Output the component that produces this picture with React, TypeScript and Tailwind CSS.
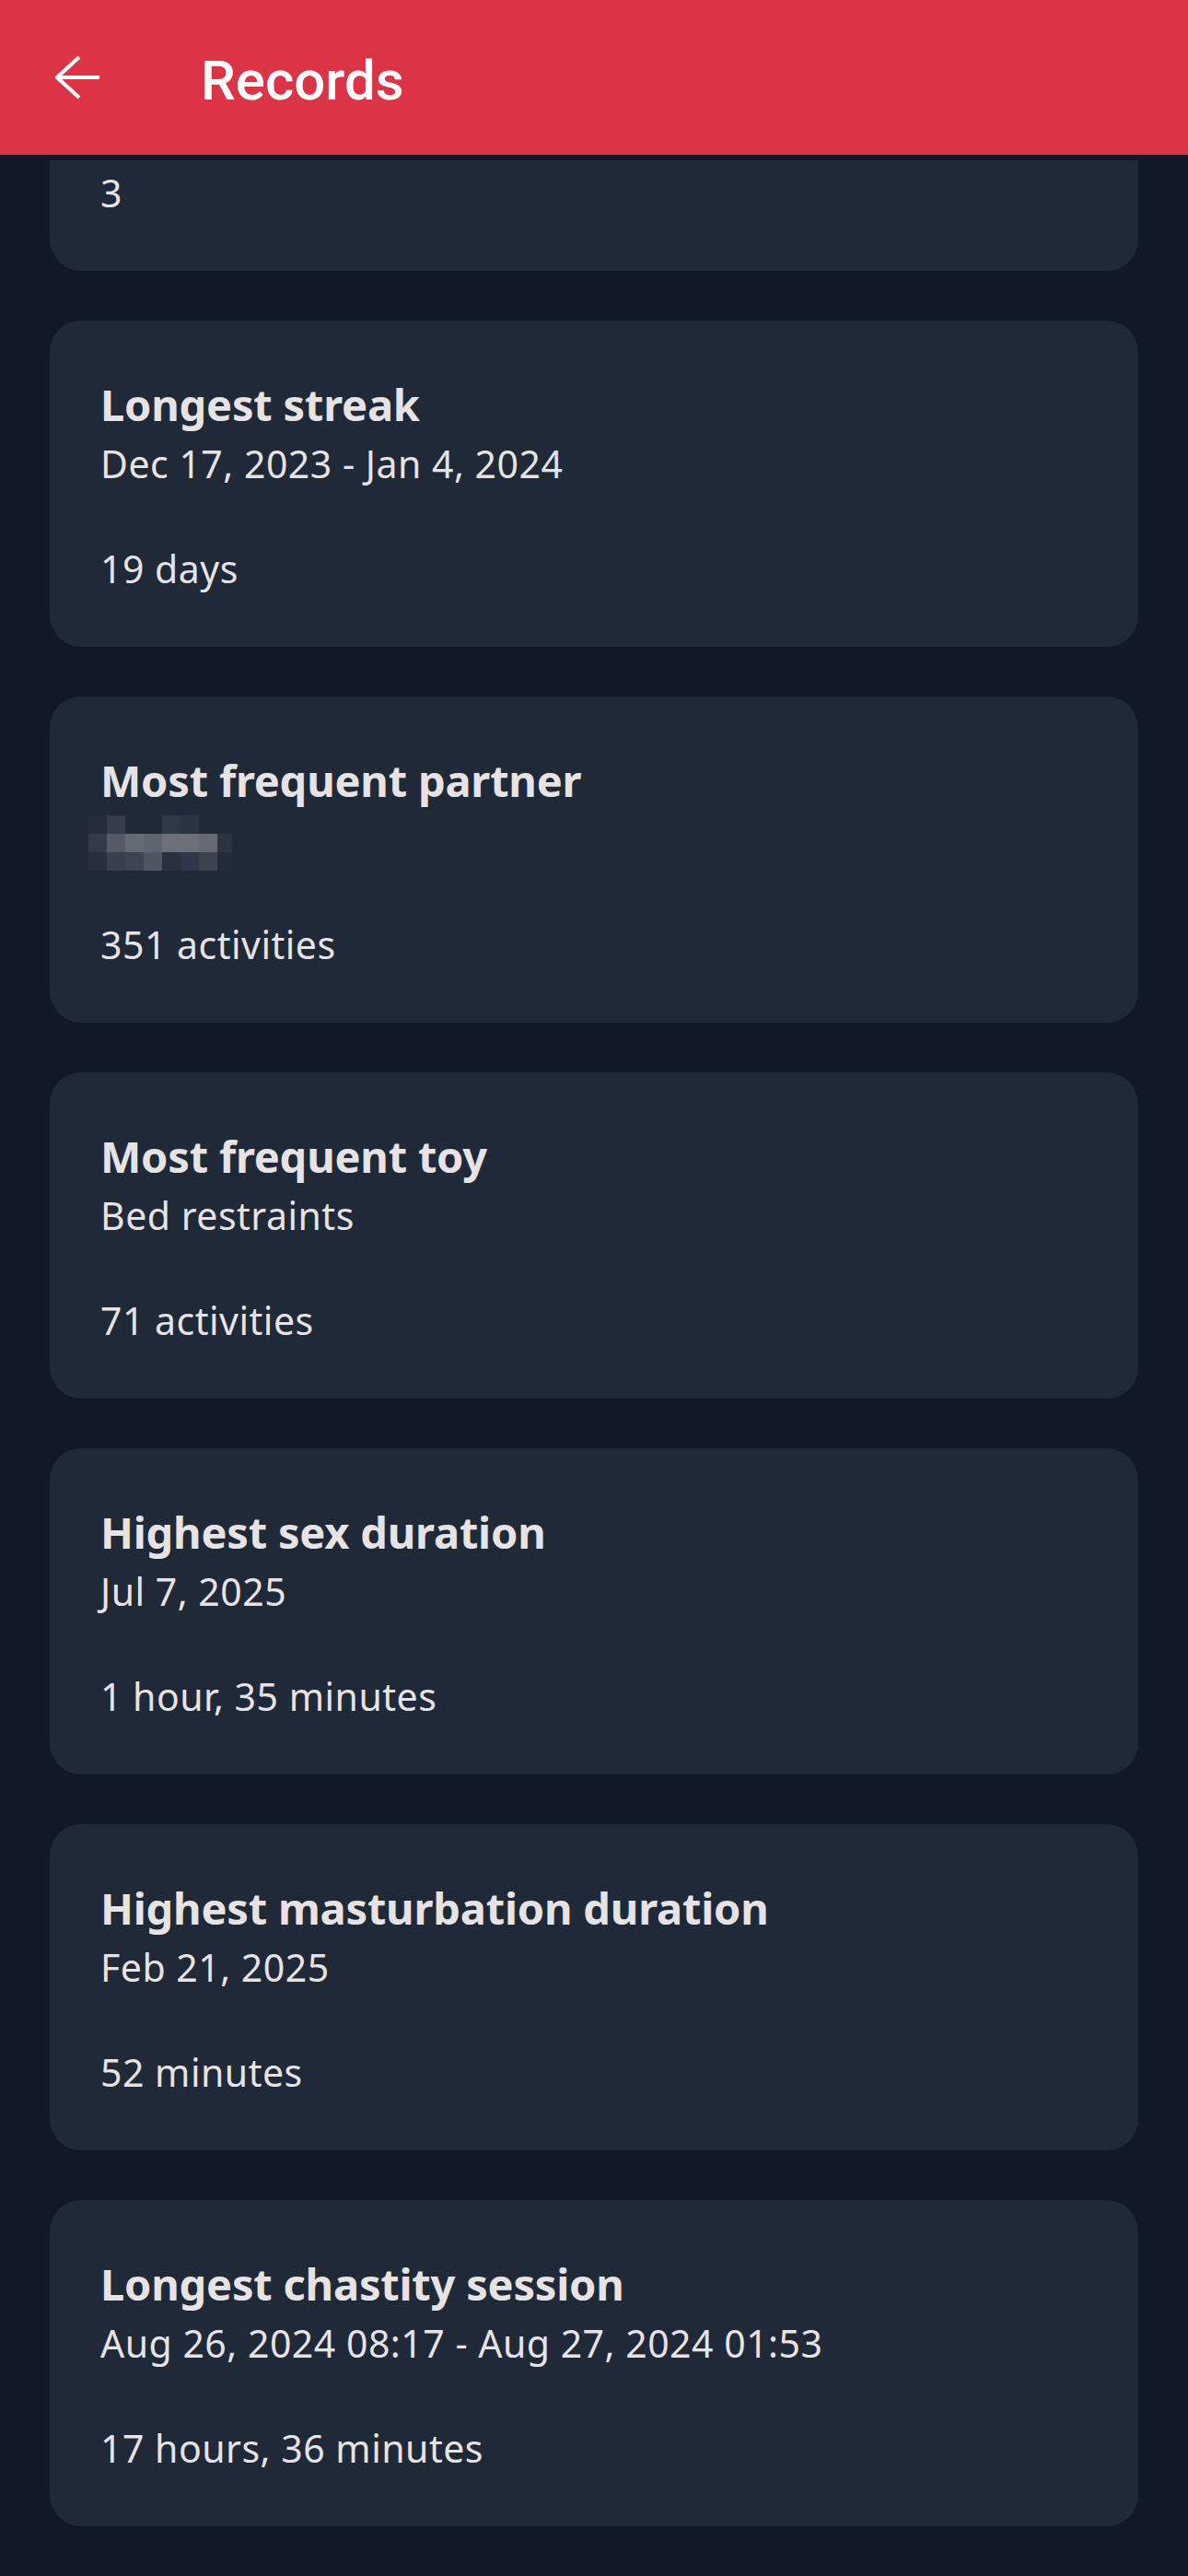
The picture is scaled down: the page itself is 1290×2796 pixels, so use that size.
import { ReactNode } from "react";

interface RecordItem {
  title: string;
  detail: ReactNode;
  value: string;
}

const records: RecordItem[] = [
  { title: "", detail: "", value: "3" },
  {
    title: "Longest streak",
    detail: "Dec 17, 2023 - Jan 4, 2024",
    value: "19 days",
  },
  {
    title: "Most frequent partner",
    detail: <HiddenName />,
    value: "351 activities",
  },
  {
    title: "Most frequent toy",
    detail: "Bed restraints",
    value: "71 activities",
  },
  {
    title: "Highest sex duration",
    detail: "Jul 7, 2025",
    value: "1 hour, 35 minutes",
  },
  {
    title: "Highest masturbation duration",
    detail: "Feb 21, 2025",
    value: "52 minutes",
  },
  {
    title: "Longest chastity session",
    detail: "Aug 26, 2024 08:17 - Aug 27, 2024 01:53",
    value: "17 hours, 36 minutes",
  },
];

// pixelated placeholder for a private name
const mosaic = [
  ["#262d3a", "#363d49", "", "", "#313846", "#2d3441", "", ""],
  ["#343a48", "#555a65", "#656a74", "#5f6570", "#6b6f78", "#6b6f78", "#666a74", "#2d3441"],
  ["#282f3c", "#3a404c", "#3d434f", "#50555f", "#2a313e", "#30374a", "#3c424e", "#252c39"],
];

function HiddenName() {
  return (
    <svg width="156" height="60" viewBox="0 0 156 60" className="-ml-[13px] mt-[3px] block">
      {mosaic.map((row, r) =>
        row.map((c, i) =>
          c ? (
            <rect key={`${r}-${i}`} x={i * 20} y={r * 20} width={i === 7 ? 16 : 20} height="20" fill={c} />
          ) : null
        )
      )}
    </svg>
  );
}

function RecordCard({ item, first }: { item: RecordItem; first?: boolean }) {
  return (
    <div
      className={`mx-[54px] h-[354px] shrink-0 rounded-[34px] bg-[#1f2937] px-[55px] pt-[63px] text-[#e7e3e4] ${
        first ? "-mt-[234px]" : ""
      }`}
      style={{ fontFamily: "'Noto Sans', sans-serif" }}
    >
      <div className="h-[56px] whitespace-nowrap text-[47px] font-bold leading-[56px] tracking-[-0.2px]">
        {item.title}
      </div>
      <div className="mt-[10px] h-[52px] whitespace-nowrap text-[41px] leading-[52px] tracking-[0.5px]">
        {item.detail}
      </div>
      <div className="mt-[62px] whitespace-nowrap text-[41px] leading-[52px] tracking-[0.5px]">{item.value}</div>
    </div>
  );
}

export default function App() {
  return (
    <div className="flex h-[2796px] w-[1290px] flex-col overflow-hidden bg-[#111827]">
      <header className="flex h-[168px] shrink-0 items-center bg-[#db3447] pl-[60px]">
        <svg width="48" height="48" viewBox="0 0 48 48" fill="none" stroke="white" strokeWidth="4">
          <path d="M2 24H48" />
          <path d="M26 2L2 24L26 46" strokeLinejoin="miter" />
        </svg>
        <h1
          className="ml-[110px] mt-[7px] text-[60px] font-medium leading-[60px] text-white"
          style={{ fontFamily: "Roboto, sans-serif" }}
        >
          Records
        </h1>
      </header>
      <main className="mt-[6px] flex flex-1 flex-col gap-[54px] overflow-hidden">
        {records.map((r, i) => (
          <RecordCard key={i} item={r} first={i === 0} />
        ))}
      </main>
    </div>
  );
}
